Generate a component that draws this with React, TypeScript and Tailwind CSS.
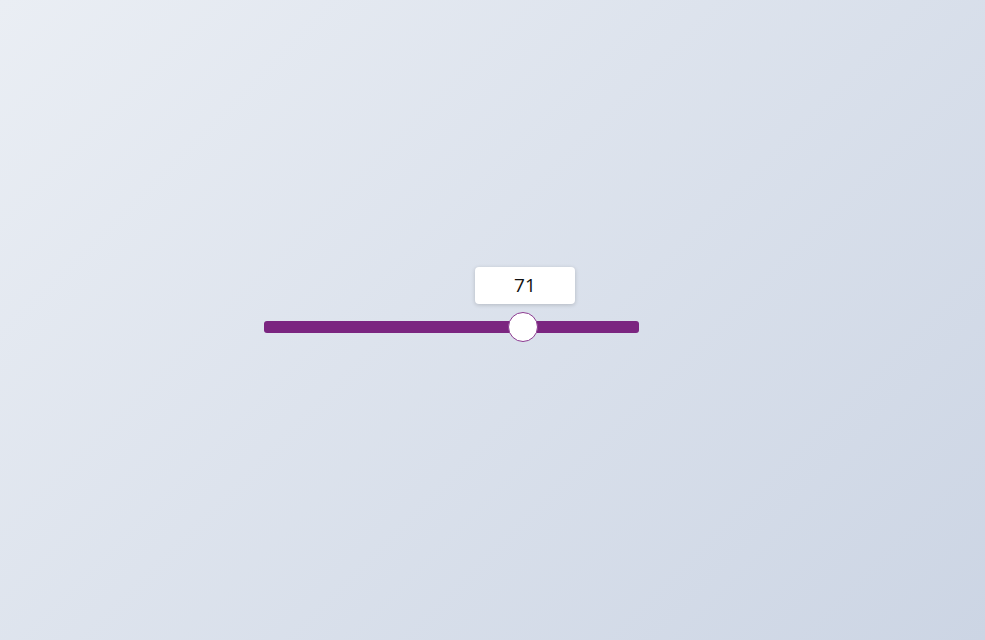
import React from 'react';

const value = 71;

export default function App() {
    const pct = value / 100;
    return (
        <div className="min-h-[640px] w-full bg-[linear-gradient(135deg,#eaeef4_0%,#ccd5e4_100%)] pt-[267px] pl-[264px] font-['Open_Sans','Liberation_Sans',sans-serif]">
            <div className="relative w-[375px] pt-[54px]">
                {/* value bubble sits above the thumb */}
                <div
                    className="absolute top-0 flex h-[37px] w-[100px] items-center justify-center rounded-[4px] bg-white text-[19px] text-[#111] shadow-[0_1px_4px_rgba(0,0,0,0.18)]"
                    style={{ left: `${pct * 345 - 34}px` }}
                >
                    {value}
                </div>
                <div className="relative h-[12px] rounded-[3px] bg-[#7b2580]">
                    <div
                        className="absolute top-[-9px] h-[30px] w-[30px] rounded-full border border-[#8b3a90] bg-white"
                        style={{ left: `${pct * 345 - 1}px` }}
                    />
                </div>
            </div>
        </div>
    );
}
